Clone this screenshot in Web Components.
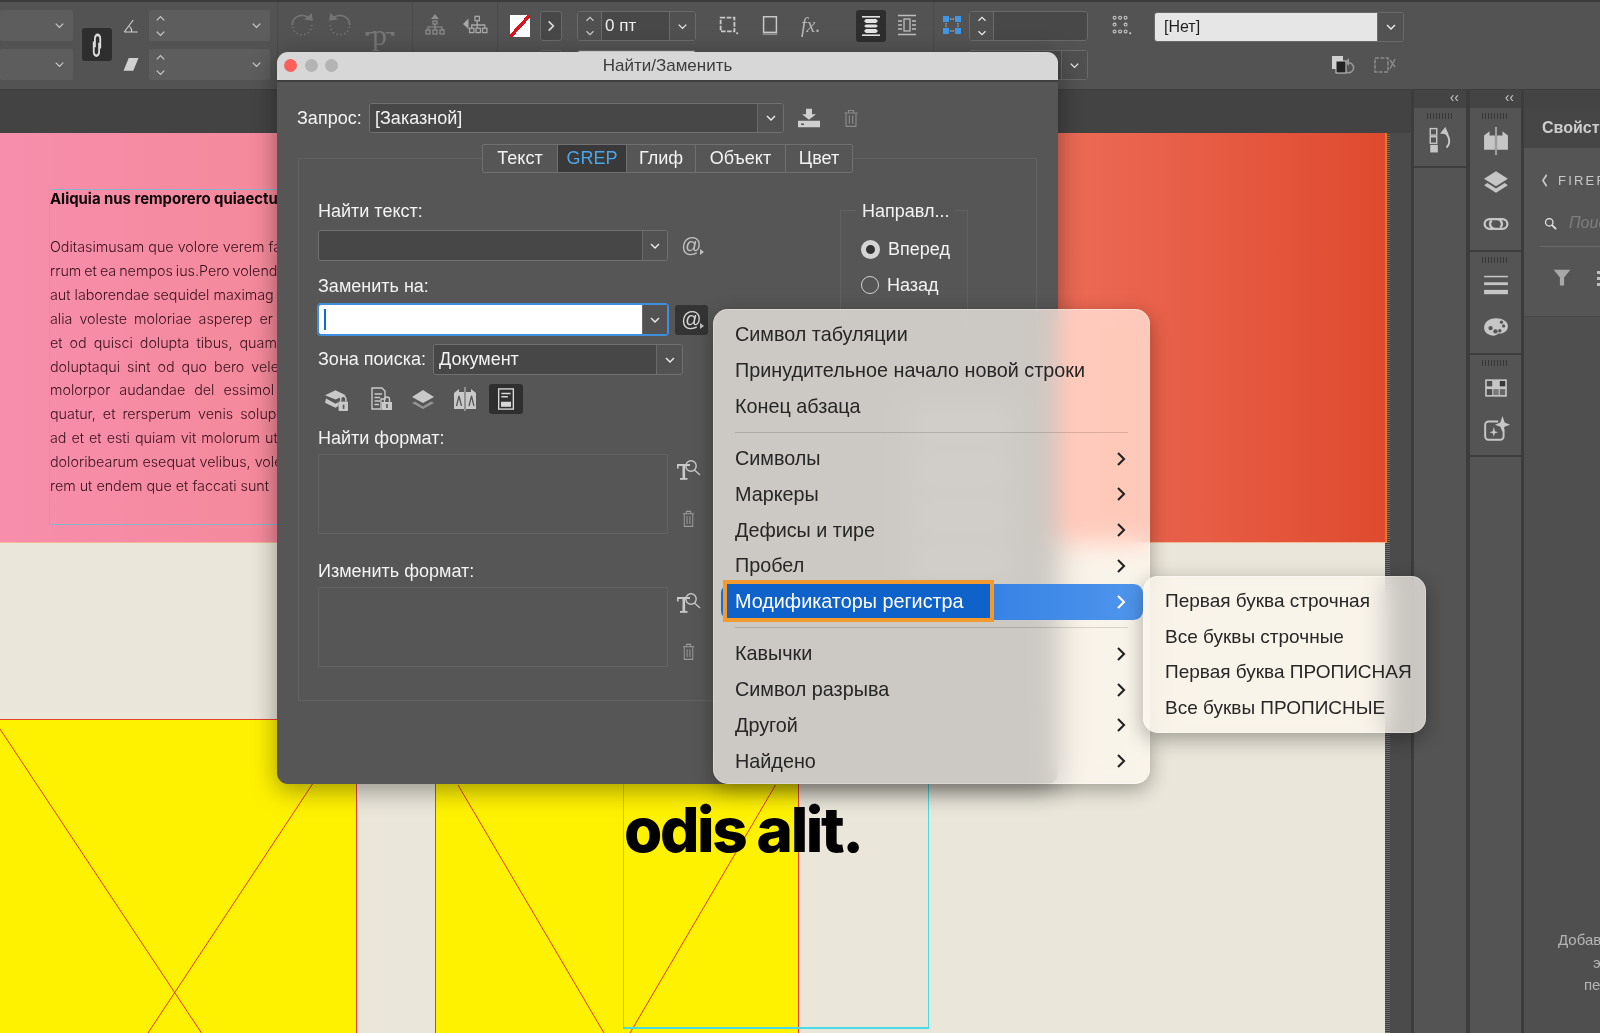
<!DOCTYPE html>
<html lang="ru">
<head>
<meta charset="utf-8">
<title>Найти/Заменить</title>
<style>
    html, body { margin: 0; height: 1033px; overflow: hidden; background: #535353; }
    body { font-family: "Liberation Sans", "Noto Sans", sans-serif; display: flex; flex-direction: column; position: relative; }
</style>
</head>
<body>
<in-toolbar></in-toolbar>
<work-area></work-area>
<find-dialog></find-dialog>
<pop-menu style="left:713px;top:309px;width:437px;height:475px;padding-top:8px;font-size:19.8px">
    <menu-item>Символ табуляции</menu-item>
    <menu-item>Принудительное начало новой строки</menu-item>
    <menu-item>Конец абзаца</menu-item>
    <menu-sep></menu-sep>
    <menu-item arrow>Символы</menu-item>
    <menu-item arrow>Маркеры</menu-item>
    <menu-item arrow>Дефисы и тире</menu-item>
    <menu-item arrow>Пробел</menu-item>
    <menu-item arrow active>Модификаторы регистра</menu-item>
    <menu-sep></menu-sep>
    <menu-item arrow>Кавычки</menu-item>
    <menu-item arrow>Символ разрыва</menu-item>
    <menu-item arrow>Другой</menu-item>
    <menu-item arrow>Найдено</menu-item>
</pop-menu>
<pop-menu style="left:1143px;top:576px;width:283px;height:157px;padding-top:7px;font-size:19px">
    <menu-item>Первая буква строчная</menu-item>
    <menu-item>Все буквы строчные</menu-item>
    <menu-item>Первая буква ПРОПИСНАЯ</menu-item>
    <menu-item>Все буквы ПРОПИСНЫЕ</menu-item>
</pop-menu>

<script>
const ICONS = {
    down: '<polyline points="6,9 12,15 18,9" fill="none" stroke="currentColor" stroke-width="2"/>',
    up: '<polyline points="6,15 12,9 18,15" fill="none" stroke="currentColor" stroke-width="2"/>',
    right: '<polyline points="8,4 16,12 8,20" fill="none" stroke="currentColor" stroke-width="2.8"/>',
    left: '<polyline points="16,3 7,12 16,21" fill="none" stroke="currentColor" stroke-width="3.4"/>',
    chain: '<g fill="none" stroke="currentColor" stroke-width="2.2"><path d="M9.5 14V6.5a3.2 3.2 0 0 1 6.4 0V15"/><path d="M14.5 10v8a3.2 3.2 0 0 1-6.4 0V9"/></g>',
    angle: '<g fill="none" stroke="currentColor" stroke-width="1.5"><path d="M3 20H21M3 20L15 4"/><path d="M10 12.5a9 9 0 0 1 3 7.5"/></g>',
    shear: '<polygon points="9,4 22,4 15,21 2,21" fill="currentColor"/>',
    rotcw: '<g fill="none" stroke="currentColor" stroke-width="1.6"><path d="M3 12a9 9 0 0 1 15-6.5"/><path d="M21 12a9 9 0 0 1-18 0" stroke-dasharray="1.2 2.4"/></g><polygon points="14,7 22,8 21,1" fill="currentColor"/>',
    rotccw: '<g fill="none" stroke="currentColor" stroke-width="1.6"><path d="M21 12a9 9 0 0 0-15-6.5"/><path d="M3 12a9 9 0 0 0 18 0" stroke-dasharray="1.2 2.4"/></g><polygon points="10,7 2,8 3,1" fill="currentColor"/>',
    corners: '<path d="M3 8V3H8" fill="none" stroke="currentColor" stroke-width="2.4"/><path d="M21 8V3H16" fill="none" stroke="currentColor" stroke-width="2.4" transform="translate(0 0)"/>',
    tree1: '<g fill="none" stroke="currentColor" stroke-width="1.2"><rect x="10" y="8" width="4" height="3"/><rect x="3" y="17" width="4" height="4"/><rect x="10" y="17" width="4" height="4"/><rect x="17" y="17" width="4" height="4"/><path d="M12 11v6M5 17v-3h14v3"/></g><polygon points="12,1 16,6 8,6" fill="currentColor"/>',
    tree2: '<g fill="none" stroke="currentColor" stroke-width="1.2"><rect x="12" y="4" width="4" height="4"/><rect x="7" y="15" width="4" height="4"/><rect x="13" y="15" width="4" height="4"/><rect x="19" y="15" width="4" height="4"/><path d="M14 8v7M9 15v-3h12v3"/></g><polygon points="1,11 6,6 6,16" fill="currentColor"/>',
    frame: '<rect x="4" y="4" width="15" height="15" fill="none" stroke="currentColor" stroke-width="2" stroke-dasharray="5 1.6"/><rect x="21" y="20" width="2" height="2" fill="currentColor"/>',
    page: '<rect x="5" y="3" width="14" height="17" fill="none" stroke="currentColor" stroke-width="1.6"/><rect x="4" y="21" width="16" height="2" fill="currentColor" opacity=".5"/>',
    align1: '<g fill="currentColor"><rect x="3" y="2" width="18" height="1.6"/><rect x="3" y="20.4" width="18" height="1.6"/><path d="M7 5h10l2 2-2 2H7L5 7ZM7 10.5h10l2 1.5-2 1.5H7L5 12ZM7 15h10l2 2-2 2H7L5 17Z"/></g>',
    align2: '<g fill="none" stroke="currentColor" stroke-width="1.3"><path d="M3 2.5H21M3 21.5H21M3 8H7M3 12H7M3 16H7M17 8H21M17 12H21M17 16H21"/><rect x="9" y="6" width="6" height="12"/></g>',
    spread: '<g fill="#3f97ea"><rect x="3" y="3" width="6" height="6"/><rect x="15" y="3" width="6" height="6"/><rect x="3" y="15" width="6" height="6"/><rect x="15" y="15" width="6" height="6"/></g><path d="M6 10V14M18 10V14M10 6H14M10 18H14" stroke="#aaa" stroke-width="1.3" stroke-dasharray="1.5 1"/>',
    dots: '<g fill="none" stroke="currentColor" stroke-width="1.2"><circle cx="5" cy="4" r="1.6"/><circle cx="11" cy="4" r="1.6"/><circle cx="17" cy="4" r="1.6"/><circle cx="5" cy="19" r="1.6"/><circle cx="11" cy="19" r="1.6"/><circle cx="17" cy="19" r="1.6"/><circle cx="5" cy="11.5" r="1.6"/><circle cx="17" cy="11.5" r="1.6"/></g><rect x="21" y="20" width="2" height="2" fill="currentColor"/>',
    revert: '<rect x="3" y="3" width="11" height="13" fill="#d0d0d0"/><rect x="7" y="8" width="10" height="12" fill="#222" stroke="#d0d0d0"/><path d="M18 10a5 5 0 1 1-1 9" fill="none" stroke="#999" stroke-width="1.5"/><polygon points="20,5 20,13 16,9" fill="#999"/>',
    clear: '<rect x="3" y="5" width="13" height="14" fill="none" stroke="#8a8a8a" stroke-width="1.6" stroke-dasharray="4 1.4"/><path d="M18 16L23 6M18 7L23 14" stroke="#8a8a8a" stroke-width="1.4"/>',
    save: '<polygon points="9,2 15,2 15,8 19,8 12,14 5,8 9,8" fill="currentColor"/><path d="M1 15H23V22H1Z" fill="currentColor"/><rect x="4" y="18" width="3" height="1.6" fill="#565656"/>',
    trash: '<g fill="none" stroke="currentColor" stroke-width="1.4"><path d="M4 6H20M9 6V3H15V6M6 6V22H18V6M10 9V19M14 9V19"/></g>',
    lockstack: '<polygon points="11,3 21,8 11,12 1,8" fill="currentColor"/><path d="M2 11L11 16 14 14.5V18L11 20 1 15Z" fill="currentColor"/><rect x="14" y="14" width="9" height="9" fill="currentColor"/><path d="M16 14v-2.5a2.5 2.5 0 0 1 5 0V14" fill="none" stroke="currentColor" stroke-width="1.4"/><rect x="18" y="17" width="1.6" height="4" fill="#565656"/>',
    lockdoc: '<path d="M3 1H13L16 4V12H12V22H3Z" fill="none" stroke="currentColor" stroke-width="1.4"/><path d="M5.5 7H13M5.5 10.5H11M5.5 14H11M5.5 17.5H10" stroke="currentColor" stroke-width="1.5"/><rect x="13" y="15" width="10" height="8" fill="currentColor"/><path d="M15.5 15v-2.5a2.5 2.5 0 0 1 5 0V15" fill="none" stroke="currentColor" stroke-width="1.4"/><rect x="17.2" y="17" width="1.6" height="4" fill="#565656"/>',
    layers: '<polygon points="12,3 23,10 12,16 1,10" fill="currentColor"/><path d="M4 14.5L12 19.5 20 14.5 23 16 12 22 1 16Z" fill="currentColor" opacity=".55"/>',
    book: '<path d="M1 6L6 2V5H11V22H1ZM13 5H18V2L23 6V22H13Z" fill="currentColor"/><rect x="11.5" y="0" width="1" height="24" fill="currentColor"/><g fill="none" stroke="#565656" stroke-width="1.3"><path d="M3.5 19L6 9 8.500 19M16 19L18.500 9 21 19"/></g>',
    story: '<rect x="4" y="1" width="16" height="22" fill="none" stroke="currentColor" stroke-width="1.5"/><path d="M7 6H17M7 9.5H14" stroke="currentColor" stroke-width="1.5"/><rect x="6.5" y="15" width="11" height="5.5" fill="currentColor"/>',
    formatsearch: '<g fill="currentColor"><rect x="1" y="6" width="13" height="2"/><rect x="6.5" y="6" width="2.6" height="15"/><rect x="4" y="20" width="7.5" height="1.8"/><rect x="1" y="6" width="1.6" height="4.5"/></g><circle cx="15" cy="8" r="5.2" fill="none" stroke="currentColor" stroke-width="1.4"/><path d="M18.5 12L24 17" stroke="currentColor" stroke-width="1.4"/>',
    pages: '<path d="M1 7L6 3V7H11V20H1ZM13 7H18V3L23 7V20H13Z" fill="currentColor"/><rect x="11.4" y="-1" width="1.2" height="26" fill="currentColor"/>',
    stack: '<polygon points="12,2 23,9 12,16 1,9" fill="currentColor"/><path d="M4 13L12 18 20 13 23 15 12 22 1 15Z" fill="currentColor"/>',
    link: '<g fill="none" stroke="currentColor" stroke-width="2.1"><path d="M10 16.500H6a4.500 4.500 0 0 1 0-9H13a4.500 4.500 0 0 1 3 7.800"/><path d="M14 7.500H18a4.500 4.500 0 0 1 0 9H11a4.500 4.500 0 0 1-3-7.800"/></g>',
    lines: '<g fill="currentColor"><rect x="1" y="3.5" width="22" height="1.4"/><rect x="1" y="9.5" width="22" height="2.6"/><rect x="1" y="16.5" width="22" height="4"/></g>',
    palette: '<path d="M12 4C5 4 1 8 1 13c0 4 4 7 9 7 3 0 3-2 5-2 4 0 8-2 8-7 0-4-5-7-11-7Z" fill="currentColor"/><g fill="#555"><circle cx="7" cy="13" r="2"/><circle cx="11.5" cy="16" r="2"/><circle cx="15.5" cy="15.5" r="1.6"/><circle cx="19" cy="11" r="1.5"/><circle cx="17" cy="7.5" r="1.5"/></g>',
    swatches: '<rect x="2" y="4" width="20" height="16" fill="currentColor"/><g fill="#4d4d4d"><rect x="3.5" y="5.5" width="5" height="5"/><rect x="15.5" y="5.5" width="5" height="5" fill="#383838"/><rect x="3.5" y="13" width="5" height="5.5"/><rect x="9.5" y="13" width="5" height="5.5" fill="#7a7a7a"/><rect x="15.5" y="13" width="5" height="5.5" fill="#666"/></g>',
    spark: '<path d="M14 5H5a3 3 0 0 0-3 3V19a3 3 0 0 0 3 3H16a3 3 0 0 0 3-3V12" fill="none" stroke="currentColor" stroke-width="1.8"/><path d="M18 0L20 6 25 8 20 10 18 15 16 10 11 8 16 6ZM10 10L11 14 14 15 11 16 10 19 9 16 6 15 9 14Z" fill="currentColor"/>',
    history: '<g fill="none" stroke="currentColor" stroke-width="1.3"><rect x="3" y="1.5" width="6" height="6"/><rect x="3" y="9" width="6" height="6"/></g><rect x="3" y="16.5" width="7" height="7" fill="currentColor"/><path d="M16 5c5 3 6 10 2 14" fill="none" stroke="currentColor" stroke-width="1.8"/><polygon points="17,0 20,7 12,6" fill="currentColor"/>',
    search: '<circle cx="10" cy="10" r="6" fill="none" stroke="currentColor" stroke-width="2"/><path d="M14.5 14.5L21 21" stroke="currentColor" stroke-width="2.6"/>',
    filter: '<polygon points="2,3 22,3 14.5,12 14.5,21 9.5,21 9.5,12" fill="currentColor"/>'
}

class UiIcon extends HTMLElement {
    constructor() {
        super()
        this.attachShadow({ mode: "open" })
    }
    connectedCallback() {
        const size = this.getAttribute('size') || 24
        const h = this.getAttribute('h') || size
        const color = this.getAttribute('color') || '#c9c9c9'
        this.shadowRoot.innerHTML = `
            <style>:host { display: inline-flex; color: ${color}; flex: none; } svg { display: block; overflow: visible; }</style>
            <svg width="${size}" height="${h}" viewBox="0 0 24 24" preserveAspectRatio="none">${ICONS[this.getAttribute('name')]}</svg>`
    }
}

class UiCombo extends HTMLElement {
    constructor() {
        super()
        this.attachShadow({ mode: "open" })
    }
    connectedCallback() {
        const arrow = this.getAttribute('arrow') || 25
        this.shadowRoot.innerHTML = `
            <style>
                :host { display: flex; box-sizing: border-box; height: 31px; border: 1.5px solid #707070; border-radius: 3px; overflow: hidden; font-size: 18px; color: #f2f2f2; }
                .field { flex: 1; background: #474747; padding-left: 5px; display: flex; align-items: center; white-space: nowrap; }
                .arrow { width: ${arrow}px; flex: none; display: flex; align-items: center; justify-content: center; border-left: 1px solid #6a6a6a; background: #525252; }
                :host([focused]) { border-color: #3f8fdd; box-shadow: 0 0 0 1px #3f8fdd; }
                :host([focused]) .field { background: #fff; }
                .caret { width: 2px; height: 21px; background: #1766d6; }
                :host([light]) .field { background: #e6e6e6; color: #1f1f1f; padding-left: 9px; font-size: 16px; }
                :host([light]) { border-color: #6a6a6a; }
            </style>
            <div class="field"><slot></slot>${this.hasAttribute('focused') ? '<span class="caret"></span>' : ''}</div>
            <div class="arrow"><ui-icon name="down" size="16" color="#efefef"></ui-icon></div>`
    }
}

class InToolbar extends HTMLElement {
    constructor() {
        super()
        this.attachShadow({ mode: "open" })
    }
    // flat box with the up/down arrows and a dropdown arrow, used on the left
    flatBox(w, stepper) {
        return `<div class="flat" style="width:${w}px">
            ${stepper ? '<div class="updown"><ui-icon name="up" size="15"></ui-icon><ui-icon name="down" size="15"></ui-icon></div>' : ''}
            <ui-icon name="down" size="15" style="margin-left:auto"></ui-icon>
        </div>`
    }
    getStyle() {
        return `
        <style>
            :host { display: flex; flex: none; box-sizing: border-box; height: 90px; padding-top: 8px; background: #535353; border-top: 2px solid #3b3b3b; border-bottom: 1px solid #3e3e3e; align-items: flex-start; overflow: hidden; position: relative; }
            .stack { display: flex; flex-direction: column; gap: 8px; flex: none; }
            .flat { height: 31px; background: #5d5d5d; border-radius: 2px; display: flex; align-items: center; padding-right: 6px; box-sizing: border-box; }
            .updown { display: flex; flex-direction: column; margin-left: 4px; gap: 0; }
            .link { width: 30px; height: 33px; margin: 18px 10px 0 9px; background: #2e2e2e; border-radius: 3px; display: flex; align-items: center; justify-content: center; flex: none; }
            .icons { display: flex; flex-direction: column; width: 27px; align-items: flex-start; gap: 20px; padding-top: 7px; flex: none; }
            .sep { width: 1px; height: 78px; margin-top: -8px; background: #4a4a4a; flex: none; }
            .group { display: flex; align-items: center; flex: none; height: 30px; }
            .p { font-family: "Liberation Serif", serif; font-size: 30px; color: #777; line-height: 30px; }
            .swatch { width: 20px; height: 22px; margin: 5px 10px 0 12px; flex: none; background: linear-gradient(to bottom right, #fff 0 44%, #d8141e 44% 56%, #fff 56%); }
            .box { box-sizing: border-box; border: 1.5px solid #6a6a6a; border-radius: 3px; background: #484848; height: 30px; display: flex; align-items: center; color: #eee; font-size: 17px; overflow: hidden; }
            .step { width: 23px; height: 100%; flex: none; display: flex; flex-direction: column; align-items: center; justify-content: center; border-right: 1px solid #6a6a6a; background: #505050; }
            .drop { width: 25px; height: 100%; flex: none; display: flex; align-items: center; justify-content: center; border-left: 1px solid #6a6a6a; background: #505050; }
            .fx { font-family: "Liberation Serif", serif; font-style: italic; font-size: 20px; color: #b4b4b4; line-height: 30px; }
            .active { width: 30px; height: 32px; margin-top: 0; background: #2e2e2e; border-radius: 3px; display: flex; align-items: center; justify-content: center; flex: none; }
        </style>`
    }
    getTemplate() {
        return `
        <div class="stack" style="width:73px">${this.flatBox(73)}${this.flatBox(73)}</div>
        <div class="link"><ui-icon name="chain" size="20" h="28" color="#dcdcdc"></ui-icon></div>
        <div class="icons"><ui-icon name="angle" size="18" color="#d0d0d0"></ui-icon><ui-icon name="shear" size="18" color="#d0d0d0"></ui-icon></div>
        <div class="stack" style="width:121px">${this.flatBox(121, true)}${this.flatBox(121, true)}</div>
        <div style="width:7px"></div><div class="sep"></div>
        <div class="group" style="width:134px;position:relative">
            <ui-icon name="rotcw" size="26" color="#747474" style="margin-left:11px"></ui-icon>
            <ui-icon name="rotccw" size="26" color="#747474" style="margin-left:12px"></ui-icon>
            <ui-icon name="corners" size="34" h="14" color="#777" style="margin:26px 0 0 10px"></ui-icon>
            <span class="p" style="margin:20px 0 0 -25px">p</span>
        </div>
        <div class="sep"></div>
        <div class="group" style="width:84px">
            <ui-icon name="tree1" size="24" color="#909090" style="margin-left:10px"></ui-icon>
            <ui-icon name="tree2" size="26" color="#a8a8a8" style="margin-left:15px"></ui-icon>
        </div>
        <div class="sep"></div>
        <div class="swatch"></div>
        <div class="stack" style="width:22px;margin-top:1px;gap:9px"><div class="box" style="width:22px;justify-content:center"><ui-icon name="right" size="14" color="#ddd"></ui-icon></div><div class="box" style="width:22px"></div></div>
        <div style="width:15px"></div>
        <div class="stack" style="width:119px;margin-top:1px;gap:9px">
            <div class="box" style="width:119px">
                <div class="step"><ui-icon name="up" size="14"></ui-icon><ui-icon name="down" size="14"></ui-icon></div>
                <span style="padding-left:3px;flex:1">0 пт</span>
                <div class="drop"><ui-icon name="down" size="15" color="#eee"></ui-icon></div>
            </div>
            <div class="box" style="width:119px;background:#ddd"></div>
        </div>
        <div class="group" style="width:144px;align-items:center">
            <ui-icon name="frame" size="22" style="margin-left:21px"></ui-icon>
            <ui-icon name="page" size="22" style="margin-left:20px"></ui-icon>
            <span class="fx" style="margin-left:20px">fx.</span>
        </div>
        <div style="width:16px"></div>
        <div class="active"><ui-icon name="align1" size="24" color="#e2e2e2"></ui-icon></div>
        <div class="group" style="width:47px"><ui-icon name="align2" size="24" style="margin-left:9px" color="#bdbdbd"></ui-icon></div>
        <div class="sep"></div>
        <div class="group" style="width:35px;justify-content:center"><ui-icon name="spread" size="24"></ui-icon></div>
        <div class="stack" style="width:119px;margin-top:1px;gap:9px">
            <div class="box" style="width:119px"><div class="step"><ui-icon name="up" size="14" color="#eee"></ui-icon><ui-icon name="down" size="14" color="#eee"></ui-icon></div></div>
            <div class="box" style="width:119px;justify-content:flex-end"><div class="drop"><ui-icon name="down" size="15" color="#eee"></ui-icon></div></div>
        </div>
        <div class="group" style="width:66px;justify-content:center"><ui-icon name="dots" size="22"></ui-icon></div>
        <div class="stack" style="width:250px;margin-top:2px;gap:8px">
            <ui-combo light arrow="25" style="height:30px">[Нет]</ui-combo>
            <div class="group" style="justify-content:flex-end;gap:19px;padding-right:8px;margin-top:0">
                <ui-icon name="revert" size="24"></ui-icon>
                <ui-icon name="clear" size="24"></ui-icon>
            </div>
        </div>`
    }
    connectedCallback() {
        this.shadowRoot.innerHTML = this.getStyle() + this.getTemplate()
    }
}

class DocCanvas extends HTMLElement {
    constructor() {
        super()
        this.attachShadow({ mode: "open" })
    }
    connectedCallback() {
        const lines = [
            ['Oditasimusam que volore verem facea', 0],
            ['rrum et ea nempos ius.Pero volendae', -1],
            ['aut laborendae sequidel maximag', 0],
            ['alia voleste moloriae asperep er', 3],
            ['et od quisci dolupta tibus, quam.', 3],
            ['doluptaqui sint od quo bero vele', 3],
            ['molorpor audandae del essimol', 5],
            ['quatur, et rersperum venis solup', 3],
            ['ad et et esti quiam vit molorum ut', 1],
            ['doloribearum esequat velibus, vole', 0],
            ['rem ut endem que et faccati sunt', 0]
        ]
        this.shadowRoot.innerHTML = `
        <style>
            :host { display: block; flex: 1; position: relative; overflow: hidden; background: #4b4b4b; }
            .page { position: absolute; left: 0; top: 0; width: 1385px; height: 900px; background: #eae6da; }
            .edge { position: absolute; left: 1385px; top: 0; width: 5px; height: 900px; background: repeating-linear-gradient(0deg, #6f6f6f 0 1px, #3f3f3f 1px 2px); }
            .band { position: absolute; left: 0; top: 0; width: 1385px; height: 409px; border-bottom: 1px solid #f4b693; box-sizing: content-box; border-right: 2px solid #e8781f;
                background: linear-gradient(90deg, #f78eac 0%, #f4899a 21%, #ec6a55 77%, #df4a2e 100%); }
            .yellow { position: absolute; width: 364px; height: 640px; background: #fff200; box-sizing: border-box; border: 1px solid #e8402a; }
            .frame { position: absolute; left: 623px; top: 500px; width: 306px; height: 396px; box-sizing: border-box; border: 1px solid #49dbe4; border-bottom-width: 2px; }
            svg { position: absolute; left: 0; top: 0; }
            .big { position: absolute; left: 624px; top: 662px; font: 800 62px/70px Inter, "Liberation Sans", sans-serif; color: #000; white-space: nowrap; letter-spacing: -2.4px; }
            .textframe { position: absolute; left: 49px; top: 56px; width: 300px; height: 336px; border: 1px solid #86b5cc; box-sizing: border-box; font-family: Inter, "Liberation Sans", sans-serif; color: #38101c; overflow: hidden; }
            .textframe b { display: block; font-size: 14.9px; font-weight: 700; line-height: 18px; color: #0c0508; white-space: nowrap; }
            .textframe div { font-size: 14.3px; font-weight: 300; line-height: 23.9px; white-space: nowrap; }
            .head { height: 27px; }
        </style>
        <div class="page"></div>
        <div class="edge"></div>
        <div class="band"></div>
        <div class="textframe">
            <b>Aliquia nus remporero quiaectur</b>
            <div class="head"></div>
            ${lines.map(l => `<div style="word-spacing:${l[1]}px">${l[0]}</div>`).join('')}
        </div>
        <div class="yellow" style="left:-7px;top:586px"></div>
        <div class="yellow" style="left:435px;top:560px"></div>
        <svg width="1385" height="900" fill="none" stroke="#e6331f" stroke-width="1">
            <path d="M0 596L201.500 900M312.500 651L148 900M458 652L604 900M775.500 652L630 900"/>
        </svg>
        <div class="frame"></div>
        <div class="big">odis alit.</div>`
    }
}

class DockColumn extends HTMLElement {
    constructor() {
        super()
        this.attachShadow({ mode: "open" })
    }
    connectedCallback() {
        const w = this.getAttribute('w')
        const sections = JSON.parse(this.getAttribute('sections'))
        const arrowLeft = this.getAttribute('chev')
        this.shadowRoot.innerHTML = `
        <style>
            :host { display: flex; flex-direction: column; flex: none; width: ${w}px; background: #545454; }
            .head { height: 18px; flex: none; background: #444; color: #c8c8c8; font-size: 14px; line-height: 15px; text-align: right; padding-right: ${arrowLeft}px; }
            section { box-sizing: border-box; display: flex; flex-direction: column; align-items: center; border-bottom: 2px solid #3e3e3e; padding-top: 5px; }
            .grip { width: 27px; height: 6px; flex: none; margin-bottom: 7px; background: repeating-linear-gradient(90deg, #363636 0 1px, transparent 1px 3px); }
            .cell { height: 30px; display: flex; align-items: center; justify-content: center; margin-bottom: 11.5px; }
        </style>
        <div class="head">‹‹</div>
        ${sections.map(s => `<section style="height:${s.h}px"><div class="grip"></div>
            ${s.icons.map(i => `<div class="cell"><ui-icon name="${i}" size="26" color="#c6c6c6"></ui-icon></div>`).join('')}
        </section>`).join('')}`
    }
}

class PropsPanel extends HTMLElement {
    constructor() {
        super()
        this.attachShadow({ mode: "open" })
    }
    connectedCallback() {
        this.shadowRoot.innerHTML = `
        <style>
            :host { display: flex; flex-direction: column; flex: 1; min-width: 0; overflow: hidden; background: #4f4f4f; white-space: nowrap; }
            .strip { height: 18px; background: #444; flex: none; }
            .title { height: 40px; flex: none; background: #464646; color: #cdcdcd; font-weight: 700; font-size: 16px; line-height: 39px; padding-left: 18px; }
            .body { height: 169px; flex: none; box-sizing: border-box; background: #555; border-bottom: 1px solid #474747; padding-left: 16px; }
            .back { display: flex; align-items: center; height: 20px; margin-top: 22px; color: #c8c8c8; font-size: 13px; letter-spacing: 2.2px; gap: 8px; }
            .search { display: flex; align-items: center; height: 24px; margin: 21px 0 0 3px; gap: 11px; color: #7e7e7e; font-style: italic; font-size: 16px; }
            .rule { height: 1px; background: #6a6a6a; margin-top: 11px; }
            .tools { display: flex; align-items: center; margin-top: 20px; padding-left: 12px; gap: 25px; }
            .more { width: 3px; height: 16px; background: repeating-linear-gradient(0deg, #c0c0c0 0 3px, transparent 3px 6px); }
            .hint { color: #b5b5b5; font-size: 15px; line-height: 22.5px; padding-top: 612px; }
            .hint div { height: 22.5px; }
        </style>
        <div class="strip"></div>
        <div class="title">Свойства</div>
        <div class="body">
            <div class="back"><ui-icon name="left" size="10" h="15"></ui-icon><span>FIREFLY</span></div>
            <div class="search"><ui-icon name="search" size="15" color="#e8e8e8"></ui-icon><span>Поиск</span></div>
            <div class="rule"></div>
            <div class="tools"><ui-icon name="filter" size="20" h="21" color="#a8a8a8"></ui-icon><div class="more"></div></div>
        </div>
        <div class="hint">
            <div style="padding-left:34px">Добавьте</div>
            <div style="padding-left:69px">эти</div>
            <div style="padding-left:60px">пе</div>
        </div>`
    }
}

class WorkArea extends HTMLElement {
    constructor() {
        super()
        this.attachShadow({ mode: "open" })
    }
    connectedCallback() {
        const col1 = JSON.stringify([{ h: 60, icons: ['history'] }])
        const col2 = JSON.stringify([
            { h: 144, icons: ['pages', 'stack', 'link'] },
            { h: 103, icons: ['lines', 'palette'] },
            { h: 102, icons: ['swatches', 'spark'] }
        ])
        this.shadowRoot.innerHTML = `
        <style>
            :host { display: flex; flex: 1; min-height: 0; background: #3c3c3c; }
            .left { width: 1411px; flex: none; display: flex; flex-direction: column; }
            .tabs { height: 43px; flex: none; background: #434343; }
            .gap3 { width: 3px; flex: none; }
            .gap4 { width: 4px; flex: none; }
        </style>
        <div class="left"><div class="tabs"></div><doc-canvas></doc-canvas></div>
        <div class="gap3"></div>
        <dock-column w="52" chev="7" sections='${col1}'></dock-column>
        <div class="gap4"></div>
        <dock-column w="51" chev="7" sections='${col2}'></dock-column>
        <div class="gap3"></div>
        <props-panel></props-panel>`
    }
}

class FindDialog extends HTMLElement {
    constructor() {
        super()
        this.attachShadow({ mode: "open" })
    }
    getStyle() {
        return `
        <style>
            :host { position: absolute; left: 277px; top: 52px; width: 781px; height: 732px; background: #565656; border-radius: 11px; box-shadow: 0 6px 26px rgba(0,0,0,.38); color: #f3f3f3; font-size: 18px; overflow: hidden; display: flex; flex-direction: column; }
            .title { height: 28px; flex: none; background: #d7d7d7; border-bottom: 2px solid #3f3f3f; display: flex; align-items: center; position: relative; color: #3c3c3c; font-size: 17px; justify-content: center; }
            .lights { position: absolute; left: 7px; top: 7px; display: flex; gap: 7.5px; }
            .lights i { width: 13px; height: 13px; border-radius: 50%; background: #b4b4b4; display: block; }
            .lights i:first-child { background: #f9605a; }
            .body { flex: 1; padding: 21px 21px 0 21px; display: flex; flex-direction: column; }
            .query { display: flex; align-items: center; height: 30px; flex: none; margin-left: -1px; }
            .query label { width: 72px; flex: none; }
            .group { margin-top: 25px; height: 543px; box-sizing: border-box; border: 1px solid #616161; margin-left: 0; width: 739px; padding: 0 0 0 19px; }
            .tabs { display: flex; width: max-content; margin: -15px 0 0 164px; height: 29px; border: 1.5px solid #707070; border-radius: 2px; box-sizing: border-box; background: #565656; }
            .tabs span { display: flex; align-items: center; justify-content: center; border-left: 1.5px solid #707070; box-sizing: border-box; font-size: 18px; }
            .tabs span:first-child { border-left: 0; }
            .tabs .on { background: #393939; color: #4ea5e6; }
            .cols { display: flex; }
            .leftcol { width: 501px; flex: none; }
            .lbl { height: 20px; line-height: 20px; white-space: nowrap; }
            .fieldrow { display: flex; align-items: center; height: 31px; }
            .at { width: 33px; height: 30px; margin-left: 7px; flex: none; display: flex; align-items: center; justify-content: center; border-radius: 3px; color: #c0c0c0; font-size: 20px; position: relative; }
            .at.on { background: #343434; color: #d8d8d8; }
            .at::after { content: ""; position: absolute; right: 4px; bottom: 6px; border-left: 4px solid #c0c0c0; border-top: 3px solid transparent; border-bottom: 3px solid transparent; }
            .zone { display: flex; align-items: center; height: 31px; margin-top: 9px; }
            .zone label { width: 115px; flex: none; white-space: nowrap; }
            .tools { display: flex; align-items: center; height: 30px; margin-top: 9px; padding-left: 6px; }
            .tools .active { width: 34px; height: 30px; background: #2f2f2f; border-radius: 3px; display: flex; align-items: center; justify-content: center; margin-left: 12px; }
            .fmt { display: flex; margin-top: 6px; }
            .fmtbox { width: 350px; height: 80px; box-sizing: border-box; border: 1.5px solid #616161; flex: none; }
            .side { width: 40px; display: flex; flex-direction: column; align-items: center; padding-top: 4px; gap: 27px; }
            .dir { margin: 37px 0 0 21px; width: 128px; height: 170px; border: 1px solid #616161; box-sizing: border-box; position: relative; padding: 28px 0 0 20px; }
            .dir .legend { position: absolute; left: 15px; top: -10px; height: 20px; line-height: 20px; background: #565656; padding: 0 6px; white-space: nowrap; }
            .radio { display: flex; align-items: center; gap: 8px; height: 20px; margin-bottom: 16px; }
            .radio i { width: 16px; height: 16px; border: 1.5px solid #d0d0d0; border-radius: 50%; display: block; flex: none; }
            .radio i.on { width: 9px; height: 9px; border: 5px solid #d4d4d4; background: #333; }
            .btns { margin: 28px 0 0 92px; display: flex; flex-direction: column; gap: 14px; }
            .btns div { width: 100px; height: 30px; border: 1px solid #808080; border-radius: 3px; background: #6a6a6a; }
        </style>`
    }
    getTemplate() {
        const tab = (t, w, on) => `<span class="${on ? 'on' : ''}" style="width:${w}px">${t}</span>`
        const fmt = (top, label) => `
            <div class="lbl" style="margin-top:${top}px">${label}</div>
            <div class="fmt"><div class="fmtbox"></div>
                <div class="side"><ui-icon name="formatsearch" size="24"></ui-icon><ui-icon name="trash" size="17" h="19" color="#9a9a9a"></ui-icon></div>
            </div>`
        return `
        <div class="title">
            <div class="lights"><i></i><i></i><i></i></div>
            Найти/Заменить
        </div>
        <div class="body">
            <div class="query">
                <label>Запрос:</label>
                <ui-combo arrow="25" style="width:415px;height:30px">[Заказной]</ui-combo>
                <ui-icon name="save" size="24" h="22" color="#cfcfcf" style="margin-left:13px"></ui-icon>
                <ui-icon name="trash" size="20" color="#8a8a8a" style="margin-left:20px"></ui-icon>
            </div>
            <div class="group">
                <div class="tabs">
                    ${tab('Текст', 74)}${tab('GREP', 69, true)}${tab('Глиф', 69)}${tab('Объект', 90)}${tab('Цвет', 67)}
                </div>
                <div class="cols">
                    <div class="leftcol">
                        <div class="lbl" style="margin-top:28px">Найти текст:</div>
                        <div class="fieldrow" style="margin-top:9px">
                            <ui-combo arrow="24" style="width:350px"></ui-combo>
                            <div class="at">@</div>
                        </div>
                        <div class="lbl" style="margin-top:15px">Заменить на:</div>
                        <div class="fieldrow" style="margin-top:8px">
                            <ui-combo arrow="24" focused style="width:350px"></ui-combo>
                            <div class="at on">@</div>
                        </div>
                        <div class="zone">
                            <label>Зона поиска:</label>
                            <ui-combo arrow="25" style="width:250px">Документ</ui-combo>
                        </div>
                        <div class="tools">
                            <ui-icon name="lockstack" size="25"></ui-icon>
                            <ui-icon name="lockdoc" size="24" style="margin-left:20px"></ui-icon>
                            <ui-icon name="layers" size="24" style="margin-left:18px"></ui-icon>
                            <ui-icon name="book" size="24" style="margin-left:18px"></ui-icon>
                            <div class="active"><ui-icon name="story" size="22" color="#d8d8d8"></ui-icon></div>
                        </div>
                        ${fmt(14, 'Найти формат:')}
                        ${fmt(27, 'Изменить формат:')}
                    </div>
                    <div>
                        <div class="dir">
                            <div class="legend">Направл...</div>
                            <div class="radio"><i class="on"></i>Вперед</div>
                            <div class="radio"><i></i>Назад</div>
                        </div>
                        <div class="btns"><div></div><div></div><div></div><div></div></div>
                    </div>
                </div>
            </div>
        </div>`
    }
    connectedCallback() {
        this.shadowRoot.innerHTML = this.getStyle() + this.getTemplate()
    }
}

class PopMenu extends HTMLElement {
    constructor() {
        super()
        this.attachShadow({ mode: "open" })
        this.shadowRoot.innerHTML = `
        <style>
            :host { position: absolute; box-sizing: border-box; border-radius: 15px; background: rgba(255,250,242,.7); -webkit-backdrop-filter: blur(13px) saturate(1.5); backdrop-filter: blur(13px) saturate(1.5); box-shadow: 0 6px 20px rgba(0,0,0,.32), inset 0 0 0 1px rgba(255,255,255,.3); color: #262626; }
        </style>
        <slot></slot>`
    }
}

class MenuItem extends HTMLElement {
    constructor() {
        super()
        this.attachShadow({ mode: "open" })
    }
    connectedCallback() {
        const active = this.hasAttribute('active')
        const arrow = this.hasAttribute('arrow')
        this.shadowRoot.innerHTML = `
        <style>
            :host { display: flex; align-items: center; height: 35.8px; margin: 0 7px 0 8px; padding: 0 14px; border-radius: 9px; white-space: nowrap; position: relative; justify-content: space-between; }
            :host([active]) { background: linear-gradient(90deg, #1a6cd8 0%, #2a78e0 45%, #4f96ec 100%); color: #fff; }
            .mark { position: absolute; left: 2px; top: -4px; width: 271px; height: 42px; box-sizing: border-box; border: 4px solid #f29a2e; background: #0f62c9; }
            .text { position: relative; }
        </style>
        ${active ? '<div class="mark"></div>' : ''}
        <span class="text"><slot></slot></span>
        ${arrow ? `<ui-icon name="right" size="18" color="${active ? '#fff' : '#222'}" style="margin-right:-1px"></ui-icon>` : ''}`
    }
}

class MenuSep extends HTMLElement {
    constructor() {
        super()
        this.attachShadow({ mode: "open" })
        this.shadowRoot.innerHTML = `
        <style>
            :host { display: flex; align-items: center; height: 16.3px; margin: 0 22px; }
            div { height: 1px; flex: 1; background: rgba(0,0,0,.14); }
        </style>
        <div></div>`
    }
}

customElements.define('ui-icon', UiIcon)
customElements.define('ui-combo', UiCombo)
customElements.define('in-toolbar', InToolbar)
customElements.define('doc-canvas', DocCanvas)
customElements.define('dock-column', DockColumn)
customElements.define('props-panel', PropsPanel)
customElements.define('work-area', WorkArea)
customElements.define('find-dialog', FindDialog)
customElements.define('pop-menu', PopMenu)
customElements.define('menu-item', MenuItem)
customElements.define('menu-sep', MenuSep)
</script>
</body>
</html>
